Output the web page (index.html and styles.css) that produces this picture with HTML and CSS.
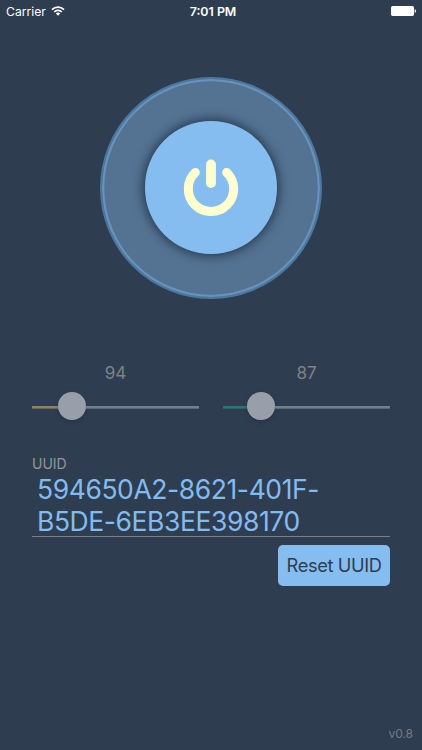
FILE: index.html
```html
<!DOCTYPE html>
<html lang="en">
<head>
<meta charset="utf-8">
<title>Beacon</title>
<link rel="stylesheet" href="styles.css">
</head>
<body>
<div class="screen">
  <header class="status">
    <div class="carrier"><span class="carrier-name">Carrier</span>
      <svg class="wifi" width="14" height="10" viewBox="0 0 14 10" fill="none" stroke="#fff" stroke-width="1.7"><path d="M1 3.7a8.5 8.5 0 0 1 12 0M3.2 6a5.4 5.4 0 0 1 7.6 0"/><path d="M7 9.7 4.8 7.5a3.1 3.1 0 0 1 4.4 0z" fill="#fff" stroke="none"/></svg>
    </div>
    <div class="time"><span class="time-text">7:01 PM</span></div>
    <svg class="battery" width="25" height="11" viewBox="0 0 25 11" fill="#fff"><rect x="0" y="0" width="23" height="10" rx="1.7"/><path d="M23.7 3.3q1.3.3 1.3 1.8t-1.3 1.8z"/></svg>
  </header>
  <main class="content">
    <div class="dial"><div class="power">
      <svg width="60" height="62" viewBox="0 0 60 62" fill="none" stroke="#ffffcf" stroke-linecap="round"><path d="M14.3 15.4a22.7 22.7 0 1 0 31.4 0" stroke-width="9"/><path d="M30 7.5v18.6" stroke-width="9.8"/></svg>
    </div></div>
    <div class="sliders">
      <div class="slider major"><span class="value">94</span><div class="track"><div class="fill"></div><div class="knob"></div></div></div>
      <div class="slider minor"><span class="value">87</span><div class="track"><div class="fill"></div><div class="knob"></div></div></div>
    </div>
    <div class="field">
      <div class="label"><span class="label-text">UUID</span></div>
      <div class="uuid"><span class="line-one">594650A2-8621-401F-</span><br><span class="line-two">B5DE-6EB3EE398170</span></div>
    </div>
    <button class="reset"><span class="reset-text">Reset UUID</span></button>
  </main>
  <footer class="version"><span class="version-text">v0.8</span></footer>
</div>
</body>
</html>
```
FILE: styles.css
```css
* { box-sizing: border-box; }
body { margin: 0; background: #2e3e50; font-family: Inter, "Liberation Sans", sans-serif; }
.screen { width: 422px; height: 750px; display: flex; flex-direction: column; overflow: hidden; }
.status { height: 22px; padding: 0 6px; display: grid; grid-template-columns: 1fr auto 1fr; align-items: center; color: #fff; }
.carrier { display: flex; align-items: center; gap: 5px; font-size: 12.2px; line-height: 22px; padding-top: 1px; }
.wifi { margin-top: -3px; }
.time { font-size: 12.4px; font-weight: 600; line-height: 22px; padding: 1px 0 0 4px; }
.battery { justify-self: end; }
.content { flex: 1; padding: 54.7px 32px 0; display: flex; flex-direction: column; }
.dial { width: 222px; height: 222px; margin: 0 0 0 68px; border-radius: 50%; border: 2px solid #4e779e; background: #547393; box-shadow: inset 0 0 0 2.3px #6693bd; display: flex; align-items: center; justify-content: center; }
.power { width: 132.4px; height: 132.4px; border-radius: 50%; background: #86bdf0; box-shadow: 0 0 12px 1px rgba(12, 24, 38, .75); display: flex; align-items: center; justify-content: center; }
.power svg { margin-top: 1px; }
.sliders { display: grid; grid-template-columns: 167px 167px; gap: 24px; margin-top: 62.3px; }
.slider { display: flex; flex-direction: column; align-items: center; }
.value { color: #7e8287; font-size: 17px; line-height: 24px; }
.track { width: 167px; height: 28px; margin-top: 7px; display: flex; align-items: center; }
.track::after { content: ""; flex: 1; height: 3px; margin-top: 3px; background: linear-gradient(#717f8f 0 66%, #596879 66%); }
.fill { height: 3px; margin-top: 3px; }
.major .fill { width: 26px; background: linear-gradient(#94805f 0 66%, #6d6557 66%); }
.minor .fill { width: 24px; background: linear-gradient(#2c7773 0 66%, #2d6165 66%); }
.knob { width: 28px; height: 28px; border-radius: 50%; background: #989fab; box-shadow: 0 2px 4px rgba(15, 25, 37, .25); }
.field { margin-top: 35px; height: 82px; border-bottom: 1px solid #7b7f85; }
.label { font-size: 14px; line-height: 18px; color: #929699; }
.uuid { color: #83bbf0; font-size: 26.5px; line-height: 31.6px; letter-spacing: -0.42px; padding: 1px 0 0 5px; white-space: nowrap; }
.reset { align-self: flex-end; width: 112px; height: 41px; margin-top: 8px; padding: 0 0 1px; border: 0; border-radius: 5px; background: #86bdf0; color: #2e3e50; font: 18.3px Inter, "Liberation Sans", sans-serif; letter-spacing: -0.4px; }
.version { height: 32px; padding: 8px 9px 0; text-align: right; font-size: 12.2px; line-height: 16px; letter-spacing: -0.15px; color: #747a81; }
```
